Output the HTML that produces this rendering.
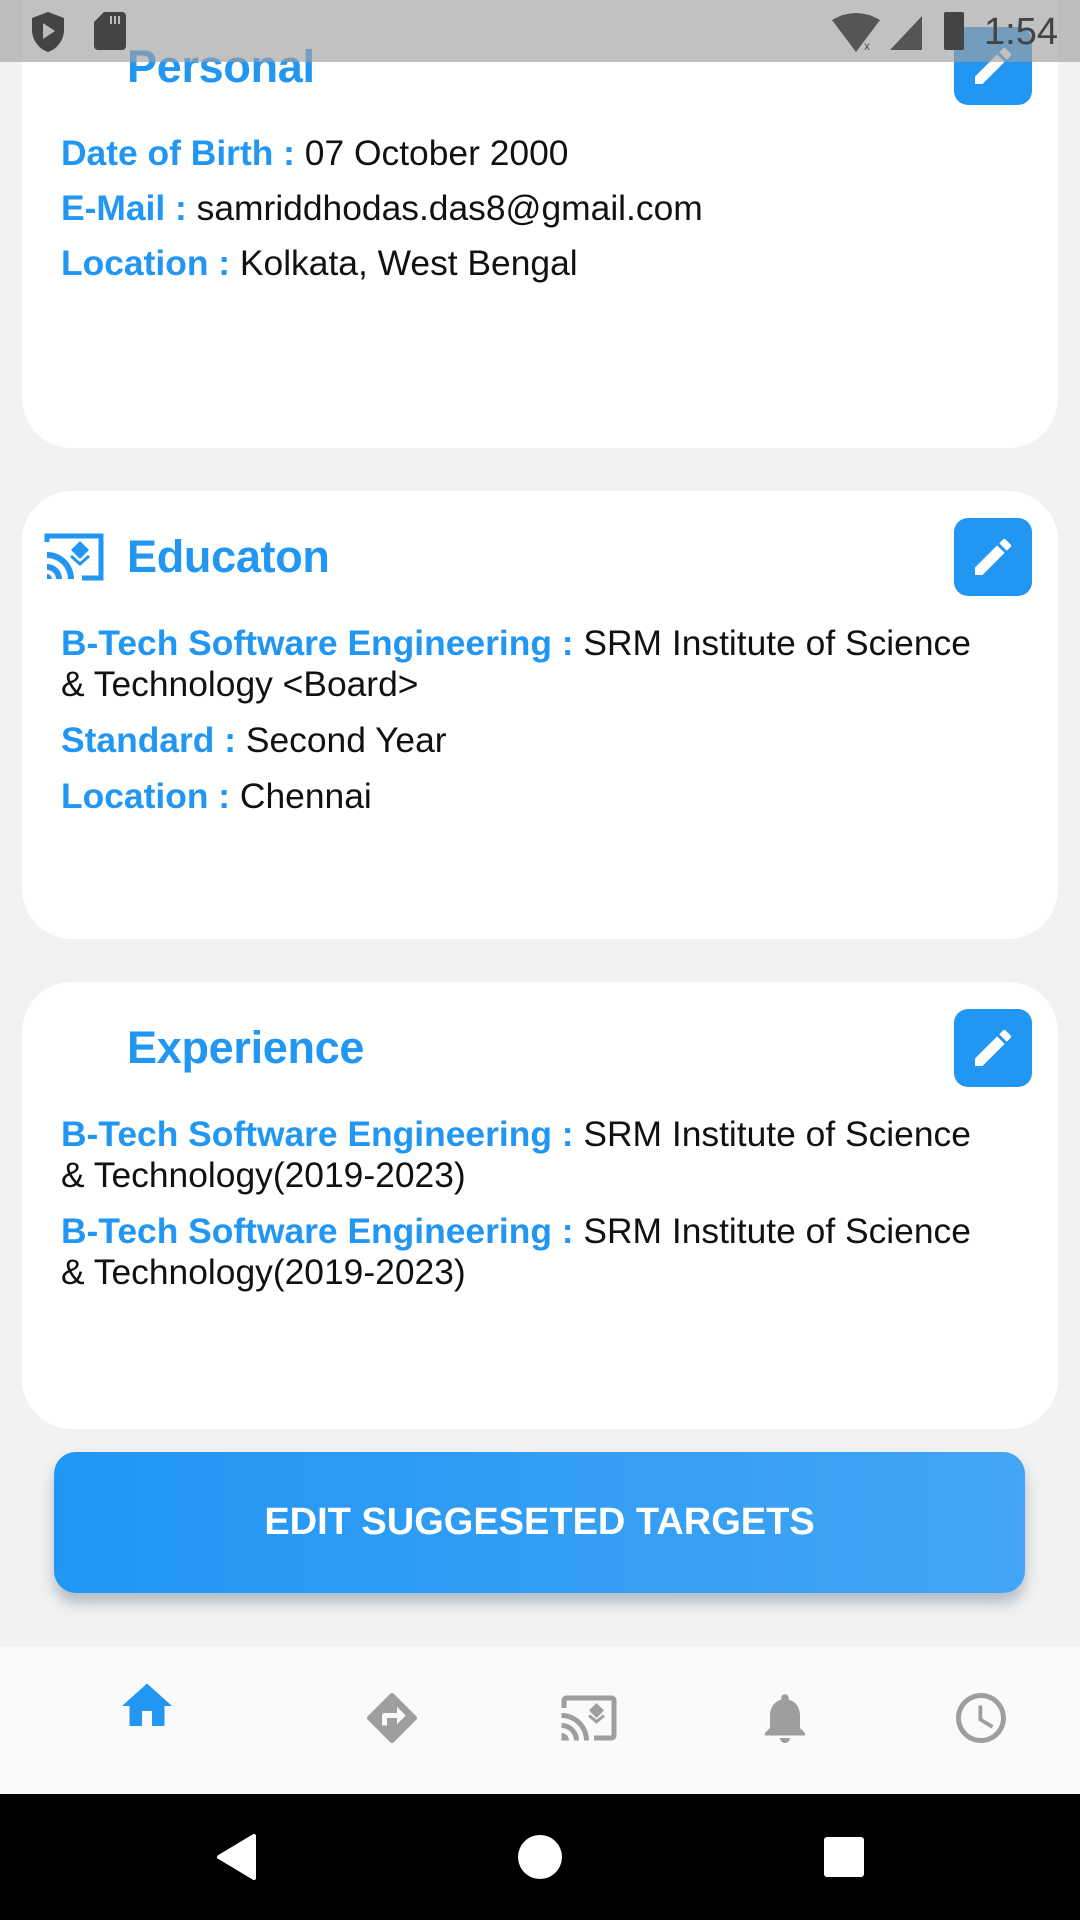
<!DOCTYPE html>
<html><head><meta charset="utf-8"><style>
*{margin:0;padding:0;box-sizing:border-box}
body{width:1080px;height:1920px;background:#f2f2f2;position:relative;overflow:hidden;font-family:"Liberation Sans",sans-serif}
.card{position:absolute;left:22px;width:1036px;background:#fff;border-radius:50px}
.t{position:absolute;left:105px;font-size:45px;font-weight:bold;color:#2196f3;line-height:50px;letter-spacing:-0.3px}
.eb{position:absolute;left:932px;width:78px;height:78px;background:#2196f3;border-radius:14px}
.eb svg{position:absolute;left:15px;top:15px}
.r{position:absolute;left:39px;font-size:35.4px;line-height:42px;color:#111;white-space:nowrap;letter-spacing:0}
.r b{color:#2196f3}
.abs{position:absolute}
</style></head><body>

<div class="card" style="top:-60px;height:508px">
  <div class="t" style="top:102px">Personal</div>
  <div class="eb" style="top:87px"><svg width="48" height="48" viewBox="0 0 24 24"><path fill="#fff" d="M3 17.25V21h3.75L17.81 9.94l-3.75-3.75L3 17.25zM20.71 7.04a1 1 0 000-1.41l-2.34-2.340a1 1 0 00-1.41 0l-1.83 1.83 3.75 3.75 1.83-1.83z"/></svg></div>
  <div class="r" style="top:192px"><b>Date of Birth :</b> 07 October 2000</div>
  <div class="r" style="top:247px"><b>E-Mail :</b> samriddhodas.das8@gmail.com</div>
  <div class="r" style="top:302px"><b>Location :</b> Kolkata, West Bengal</div>
</div>

<div class="card" style="top:491px;height:448px">
  <svg class="abs" style="left:22px;top:41px" width="60" height="50" viewBox="0 0 60 50"><path fill="none" stroke="#2196f3" stroke-width="5" d="M3 10V4h54v42H38"/><path fill="#2196f3" d="M3 20a27 27 0 0 1 27 27h-6A21 21 0 0 0 3 26zM3 32a15 15 0 0 1 15 15h-6a9 9 0 0 0-9-9zM3 42a5 5 0 0 1 5 5H3z"/><path fill="#2196f3" d="M36 9l9 9-9 9-9-9z"/><path fill="none" stroke="#2196f3" stroke-width="3" d="M27 24l9 8 9-8"/></svg>
  <div class="t" style="top:41px">Educaton</div>
  <div class="eb" style="top:27px"><svg width="48" height="48" viewBox="0 0 24 24"><path fill="#fff" d="M3 17.25V21h3.75L17.81 9.94l-3.75-3.75L3 17.25zM20.71 7.04a1 1 0 000-1.41l-2.34-2.34a1 1 0 00-1.41 0l-1.83 1.83 3.75 3.75 1.83-1.83z"/></svg></div>
  <div class="r" style="top:131px"><b>B-Tech Software Engineering :</b> SRM Institute of Science</div>
  <div class="r" style="top:172px">&amp; Technology &lt;Board&gt;</div>
  <div class="r" style="top:228px"><b>Standard :</b> Second Year</div>
  <div class="r" style="top:284px"><b>Location :</b> Chennai</div>
</div>

<div class="card" style="top:982px;height:447px">
  <div class="t" style="top:41px">Experience</div>
  <div class="eb" style="top:27px"><svg width="48" height="48" viewBox="0 0 24 24"><path fill="#fff" d="M3 17.25V21h3.75L17.81 9.94l-3.75-3.75L3 17.25zM20.71 7.04a1 1 0 000-1.41l-2.34-2.34a1 1 0 00-1.41 0l-1.83 1.83 3.75 3.75 1.83-1.83z"/></svg></div>
  <div class="r" style="top:131px"><b>B-Tech Software Engineering :</b> SRM Institute of Science</div>
  <div class="r" style="top:172px">&amp; Technology(2019-2023)</div>
  <div class="r" style="top:228px"><b>B-Tech Software Engineering :</b> SRM Institute of Science</div>
  <div class="r" style="top:269px">&amp; Technology(2019-2023)</div>
</div>

<div class="abs" style="left:54px;top:1452px;width:971px;height:141px;border-radius:22px;background:linear-gradient(90deg,#2196f3,#42a5f5);box-shadow:0 10px 14px rgba(60,90,120,0.35);color:#fff;font-weight:bold;font-size:38px;text-align:center;line-height:141px">EDIT SUGGESETED TARGETS</div>

<div class="abs" style="left:0;top:1647px;width:1080px;height:147px;background:#fafafa"></div>
<svg class="abs" style="left:117px;top:1676px" width="60" height="60" viewBox="0 0 24 24"><path fill="#2196f3" d="M10 20v-6h4v6h5v-8h3L12 3 2 12h3v8z"/></svg>
<svg class="abs" style="left:362px;top:1688px" width="60" height="60" viewBox="0 0 24 24"><path fill="#9e9e9e" d="M21.71 11.29l-9-9a1 1 0 00-1.42 0l-9 9a1 1 0 000 1.42l9 9a1 1 0 001.42 0l9-9a1 1 0 000-1.42zM14 14.5V12h-4v3H8v-4a1 1 0 011-1h5V7.5l3.5 3.5-3.5 3.5z"/></svg>
<svg class="abs" style="left:559px;top:1688px" width="60" height="60" viewBox="0 0 24 24"><path fill="#9e9e9e" d="M21 3H3c-1.1 0-2 .9-2 2v3h2V5h18v14h-7v2h7c1.1 0 2-.9 2-2V5c0-1.1-.9-2-2-2zM1 18v3h3c0-1.66-1.34-3-3-3zm0-4v2c2.76 0 5 2.24 5 5h2c0-3.87-3.13-7-7-7zm0-4v2a9 9 0 019 9h2c0-6.08-4.93-11-11-11z"/><path fill="#9e9e9e" d="M15 6l3 3-3 3-3-3z"/><path fill="none" stroke="#9e9e9e" stroke-width="1.2" d="M12 11l3 2.5 3-2.5"/></svg>
<svg class="abs" style="left:755px;top:1688px" width="60" height="60" viewBox="0 0 24 24"><path fill="#9e9e9e" d="M12 22c1.1 0 2-.9 2-2h-4c0 1.1.9 2 2 2zm6-6v-5c0-3.07-1.64-5.64-4.5-6.32V4c0-.83-.67-1.5-1.5-1.5s-1.5.67-1.5 1.5v.68C7.63 5.36 6 7.92 6 11v5l-2 2v1h16v-1l-2-2z"/></svg>
<svg class="abs" style="left:951px;top:1688px" width="60" height="60" viewBox="0 0 24 24"><path fill="#9e9e9e" d="M12 2C6.5 2 2 6.5 2 12s4.5 10 10 10 10-4.5 10-10S17.5 2 12 2zm0 18c-4.41 0-8-3.59-8-8s3.59-8 8-8 8 3.59 8 8-3.59 8-8 8zm.5-13H11v6l5.2 3.2.8-1.3-4.5-2.7V7z"/></svg>

<div class="abs" style="left:0;top:1794px;width:1080px;height:126px;background:#000"></div>
<svg class="abs" style="left:214px;top:1833px" width="44" height="48" viewBox="0 0 44 48"><path fill="#fff" d="M40 3v42L5 24z" stroke="#fff" stroke-width="4" stroke-linejoin="round"/></svg>
<div class="abs" style="left:518px;top:1835px;width:44px;height:44px;border-radius:50%;background:#fff"></div>
<div class="abs" style="left:824px;top:1837px;width:40px;height:40px;border-radius:3px;background:#fff"></div>

<div class="abs" style="left:0;top:0;width:1080px;height:62px;background:rgba(160,160,160,0.65)"></div>
<svg class="abs" style="left:30px;top:12px" width="36" height="40" viewBox="0 0 36 40"><path fill="#444" d="M18 0L2 6v12c0 10 7 19 16 22 9-3 16-12 16-22V6z"/><path fill="#bbb" d="M13 11l12 8-12 8z"/></svg>
<svg class="abs" style="left:94px;top:12px" width="32" height="38" viewBox="0 0 32 38"><path fill="#444" d="M10 0h18a4 4 0 014 4v30a4 4 0 01-4 4H4a4 4 0 01-4-4V10z"/><path fill="#bbb" d="M16 4h2v8h-2zM20 4h2v8h-2zM24 4h2v8h-2z"/></svg>
<svg class="abs" style="left:832px;top:12px" width="92" height="40" viewBox="0 0 92 40"><path fill="#555" d="M0 8Q24-6 48 8L24 40z"/><path fill="#555" d="M90 4v34H58z"/><text x="32" y="38" font-size="12" fill="#555" font-family="Liberation Sans">x</text></svg>
<div class="abs" style="left:944px;top:12px;width:20px;height:38px;background:#444;border-radius:2px"></div>
<div class="abs" style="left:984px;top:8px;font-size:38px;color:#444;line-height:48px">1:54</div>
</body></html>
